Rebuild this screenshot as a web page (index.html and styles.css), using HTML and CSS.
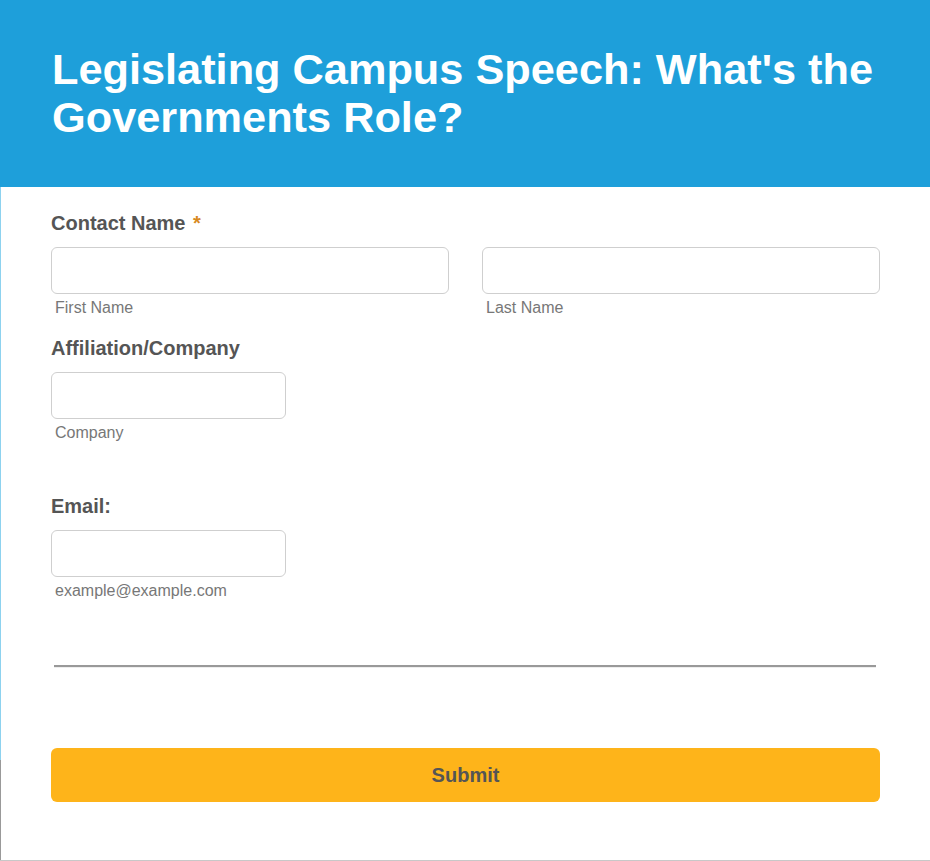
FILE: index.html
```html
<!DOCTYPE html>
<html lang="en">
<head>
    <meta charset="UTF-8">
    <meta name="viewport" content="width=device-width, initial-scale=1.0">
    <title>Legislating Campus Speech</title>
    <link rel="stylesheet" href="styles.css">
</head>
<body>
    <div class="page">
        <header class="form-header">
            <h1>Legislating Campus Speech: What's the Governments Role?</h1>
        </header>

        <form class="form-body" onsubmit="return false;">
            <div class="field">
                <label class="field-label">Contact Name <span class="req">*</span></label>
                <div class="name-row">
                    <div class="sub-field">
                        <input type="text" class="input">
                        <span class="sub-label">First Name</span>
                    </div>
                    <div class="sub-field">
                        <input type="text" class="input">
                        <span class="sub-label">Last Name</span>
                    </div>
                </div>
            </div>

            <div class="field">
                <label class="field-label">Affiliation/Company</label>
                <div class="sub-field short">
                    <input type="text" class="input">
                    <span class="sub-label">Company</span>
                </div>
            </div>

            <div class="field email">
                <label class="field-label">Email:</label>
                <div class="sub-field short">
                    <input type="email" class="input">
                    <span class="sub-label">example@example.com</span>
                </div>
            </div>

            <hr class="divider">

            <button type="submit" class="submit-btn">Submit</button>
        </form>
    </div>
</body>
</html>
```

FILE: styles.css
```css
body {
    margin: 0;
    font-family: "Liberation Sans", Arial, sans-serif;
    background: #fff;
}
.page {
    width: 930px;
    height: 860px;
    border-bottom: 1px solid #c8c8c8;
    position: relative;
}
.page::before {
    content: "";
    position: absolute;
    left: 0;
    top: 187px;
    width: 1px;
    height: 573px;
    background: #8dd2ef;
}
.page::after {
    content: "";
    position: absolute;
    left: 0;
    top: 760px;
    width: 1px;
    height: 100px;
    background: #999;
}
.form-header {
    background: #1e9fda;
    height: 187px;
    box-sizing: border-box;
    padding: 45px 30px 0 52px;
}
.form-header h1 {
    margin: 0;
    color: #fff;
    font-size: 43.3px;
    line-height: 48px;
    font-weight: bold;
}
.form-body {
    padding: 24px 50px 0 51px;
}
.field {
    margin-bottom: 19px;
}
.field.email {
    margin-top: 52px;
}
.field-label {
    display: block;
    color: #555;
    font-size: 20px;
    font-weight: bold;
    line-height: 24px;
    margin-bottom: 12px;
}
.req {
    color: #d8891f;
    margin-left: 2px;
}
.name-row {
    display: flex;
    gap: 33px;
}
.sub-field {
    display: flex;
    flex-direction: column;
    flex: 1;
}
.sub-field.short {
    width: 235px;
}
.input {
    box-sizing: border-box;
    width: 100%;
    height: 47px;
    border: 1px solid #cfcfcf;
    border-radius: 6px;
    background: #fff;
    margin: 0;
}
.sub-label {
    color: #777;
    font-size: 16px;
    line-height: 18px;
    margin: 5px 0 0 4px;
}
.divider {
    margin: 65px 4px 0 3px;
    height: 2px;
    border: none;
    background: #999;
    box-shadow: 0 1px 0 #eee;
}
.submit-btn {
    display: block;
    width: 100%;
    height: 54px;
    margin-top: 81px;
    background: #feb41a;
    border: none;
    border-radius: 6px;
    color: #555;
    font-family: "Liberation Sans", Arial, sans-serif;
    font-size: 20px;
    font-weight: bold;
    cursor: pointer;
}
```
